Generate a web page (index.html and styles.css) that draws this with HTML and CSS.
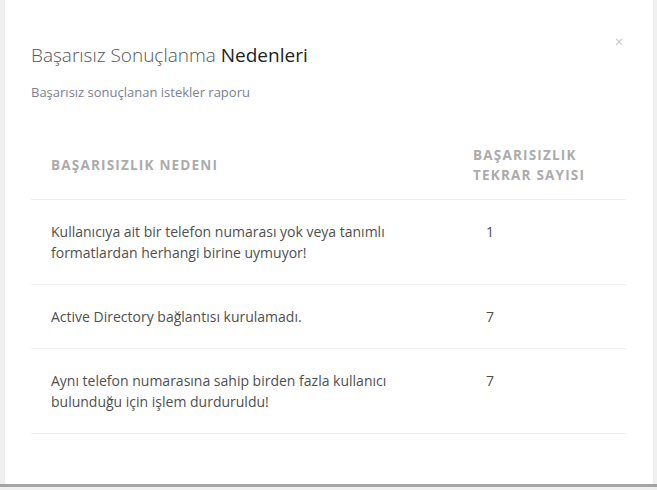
FILE: index.html
```html
<!DOCTYPE html>
<html lang="tr">
<head>
<meta charset="utf-8">
<title>Başarısız Sonuçlanma Nedenleri</title>
<link rel="stylesheet" href="styles.css">
</head>
<body>
<div class="modal">
  <button class="close" aria-label="Kapat">×</button>
  <div class="modal-head">
    <h2 class="title"><span class="light">Başarısız Sonuçlanma</span> Nedenleri</h2>
    <p class="subtitle">Başarısız sonuçlanan istekler raporu</p>
  </div>
  <table class="report">
    <thead>
      <tr>
        <th class="c-reason">BAŞARISIZLIK NEDENI</th>
        <th class="c-count">BAŞARISIZLIK<br>TEKRAR SAYISI</th>
      </tr>
    </thead>
    <tbody>
      <tr>
        <td class="c-reason">Kullanıcıya ait bir telefon numarası yok veya tanımlı formatlardan herhangi birine uymuyor!</td>
        <td class="c-count">1</td>
      </tr>
      <tr>
        <td class="c-reason">Active Directory bağlantısı kurulamadı.</td>
        <td class="c-count">7</td>
      </tr>
      <tr>
        <td class="c-reason">Aynı telefon numarasına sahip birden fazla kullanıcı bulunduğu için işlem durduruldu!</td>
        <td class="c-count">7</td>
      </tr>
    </tbody>
  </table>
</div>
<div class="backdrop-strip"></div>
</body>
</html>
```

FILE: styles.css
```css
html, body {
  margin: 0;
  padding: 0;
  background: #f0f0f0;
}
body {
  font-family: "Open Sans", "Noto Sans", sans-serif;
  width: 657px;
  height: 490px;
  overflow: hidden;
}
.modal {
  position: relative;
  box-sizing: border-box;
  width: 650px;
  height: 484px;
  margin-left: 4px;
  background: #fff;
  border-left: 1px solid #ececec;
  border-right: 1px solid #ececec;
  padding: 0 27px 0 26px;
}
.close {
  position: absolute;
  top: 34px;
  right: 30px;
  border: 0;
  background: none;
  padding: 0;
  font-family: "Open Sans", sans-serif;
  font-size: 14px;
  line-height: 16px;
  color: #c4c4c4;
}
.modal-head {
  padding-top: 41px;
}
.title {
  margin: 0;
  font-size: 19px;
  line-height: 28px;
  font-weight: 400;
  color: #222;
}
.title .light {
  font-weight: 300;
  color: #555;
}
.subtitle {
  margin: 15px 0 0;
  font-size: 13px;
  line-height: 16px;
  color: #7b8094;
}
.report {
  width: 100%;
  margin-top: 45px;
  border-collapse: collapse;
}
.report th {
  text-align: left;
  font-size: 13.5px;
  line-height: 20px;
  font-weight: 700;
  letter-spacing: 1.2px;
  color: #ababab;
  padding: 0 20px 14px;
  border-bottom: 1px solid #efefef;
  vertical-align: middle;
}
.report td {
  font-size: 14px;
  line-height: 21px;
  color: #4f4f4f;
  padding: 21px 20px;
  border-bottom: 1px solid #efefef;
  vertical-align: top;
}
.report .c-reason {
  width: 382px;
}
.report td.c-count {
  padding-left: 33px;
}
.backdrop-strip {
  height: 3px;
  background: #a4a4a4;
}
```
